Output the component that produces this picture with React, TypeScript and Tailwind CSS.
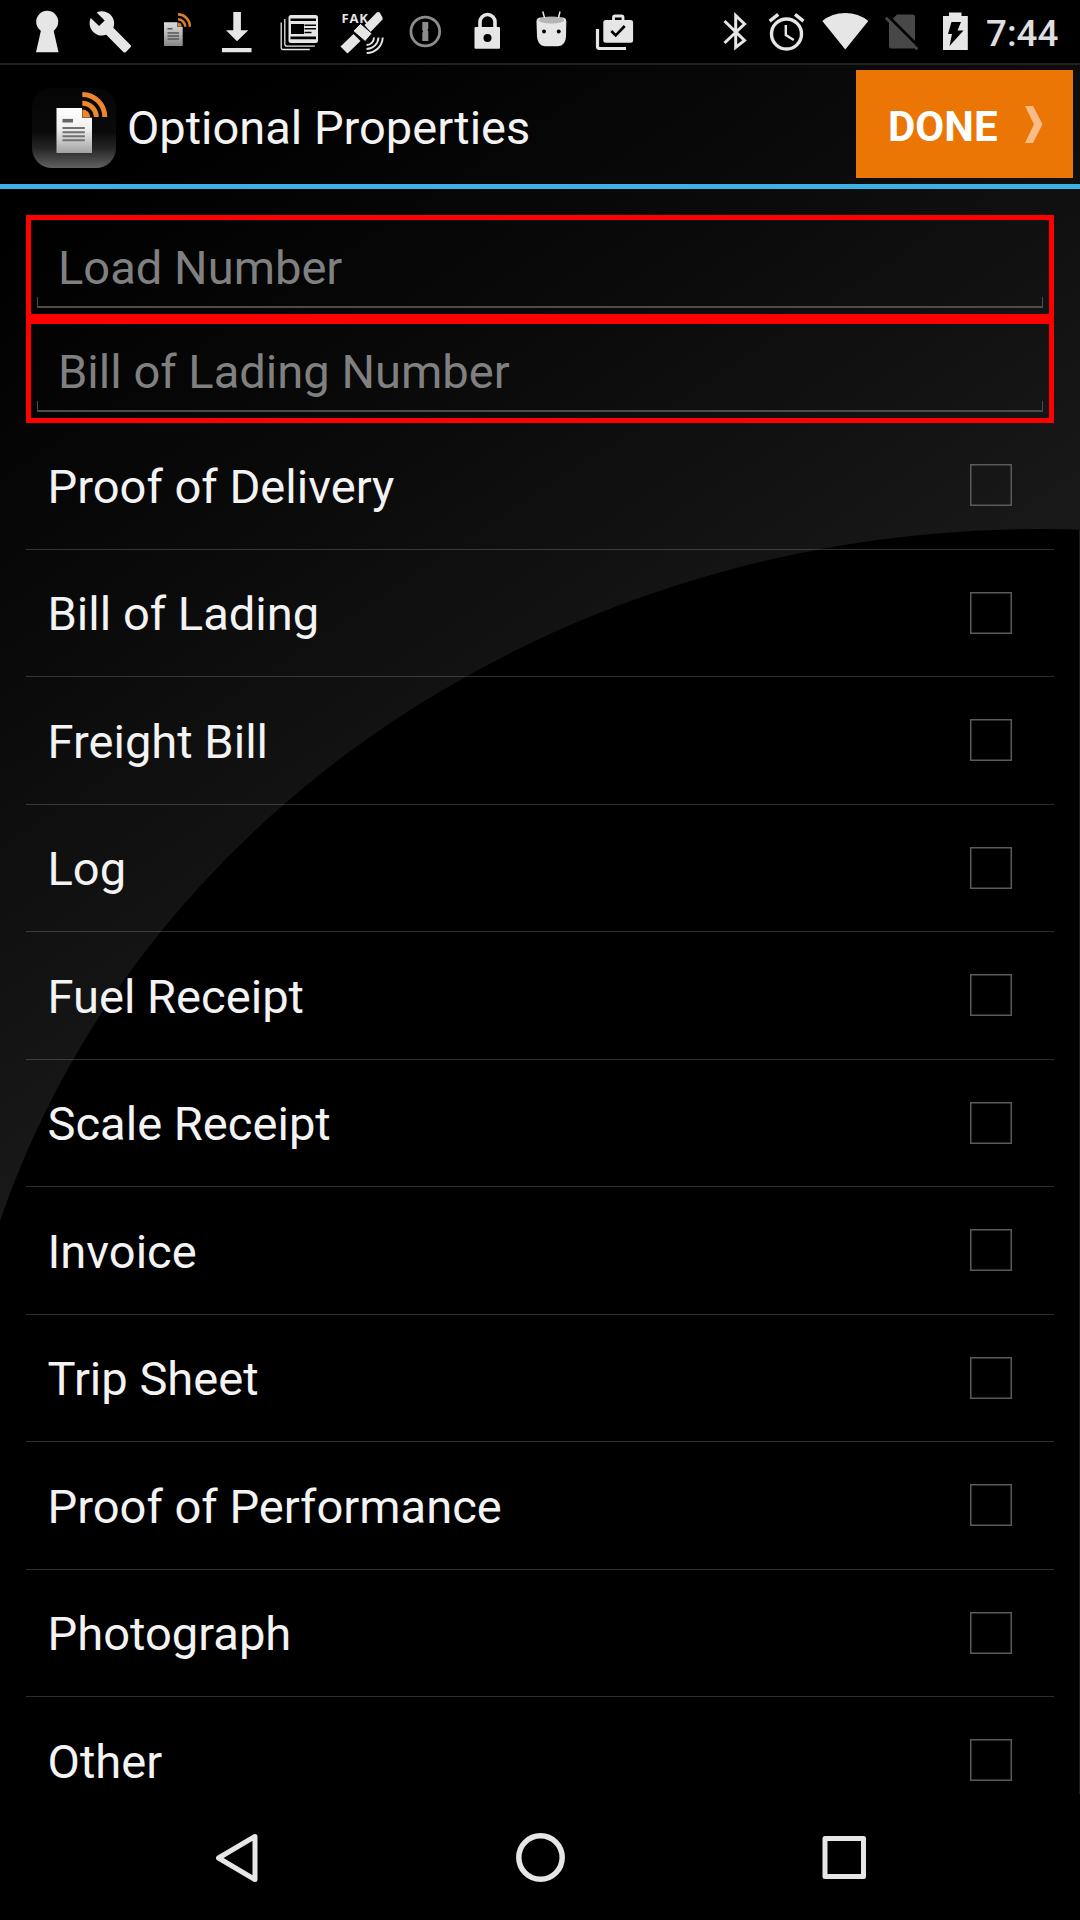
import React from "react";

const ITEMS = [
  "Proof of Delivery",
  "Bill of Lading",
  "Freight Bill",
  "Log",
  "Fuel Receipt",
  "Scale Receipt",
  "Invoice",
  "Trip Sheet",
  "Proof of Performance",
  "Photograph",
  "Other",
];

const LIGHT = "#e6e6e6";

// Every status glyph is drawn in status bar coordinates and windowed by its viewBox.
function Slot({ x, w = 63, children }: { x: number; w?: number; children: React.ReactNode }) {
  return (
    <svg width={w} height={63} viewBox={`${x} 0 ${w} 63`} className="shrink-0" fill={LIGHT}>
      {children}
    </svg>
  );
}

function StatusBar() {
  return (
    <div className="flex h-[63px] items-center bg-black pl-4">
      <Slot x={16}>
        <circle cx="47.2" cy="21.8" r="11" />
        <path d="M41.5 28h11.5l5.5 24.3H36z" />
      </Slot>
      <Slot x={79}>
        <path
          transform="translate(87.8 9.2) scale(1.88)"
          d="M22.7 19l-9.1-9.1c.9-2.3.4-5-1.5-6.9-2-2-5-2.4-7.4-1.3L9 6 6 9 1.6 4.7C.4 7.1.9 10.1 2.9 12.1c1.9 1.9 4.6 2.4 6.9 1.5l9.1 9.1c.4.4 1 .4 1.4 0l2.3-2.3c.5-.4.5-1.1.1-1.4z"
        />
      </Slot>
      <Slot x={142}>
        <defs>
          <linearGradient id="paperSmall" x1="0" y1="0" x2="0" y2="1">
            <stop offset="0" stopColor="#dcdcdc" />
            <stop offset="0.5" stopColor="#b5b5b5" />
            <stop offset="1" stopColor="#868686" />
          </linearGradient>
        </defs>
        <path d="M164 22.3h13.5v4.7h5.2v19H164z" fill="url(#paperSmall)" />
        <path d="M167.5 28.8h5M167.5 33h11.5M167.5 36h11.5M167.5 39h11.5" stroke="#555" strokeWidth="1.4" />
        <g fill="none" stroke="#d9802f" strokeWidth="2.6">
          <path d="M178 14.4A12 12 0 0 1 189.8 26.8" />
          <path d="M178 19.2A7.5 7.5 0 0 1 185.2 26.8" />
        </g>
        <path d="M178 22.7a4 4 0 0 1 3.8 4.1H178z" fill="#d9802f" />
      </Slot>
      <Slot x={205}>
        <path d="M233.3 12h7.6v18.3h7.4L237 41.3l-11-11h7.3zM222 48h29.5v4.3H222z" />
      </Slot>
      <Slot x={268}>
        <path d="M291 15h24.500a2.500 2.500 0 0 1 2.500 2.500v23a2.500 2.500 0 0 1-2.500 2.500H291a2.500 2.500 0 0 1-2.500-2.500v-23a2.500 2.500 0 0 1 2.500-2.500z" />
        <path d="M290.500 18.500h25.500v2.500h-25.500zM290.500 36.500h25.500v2.800h-25.500zM291 24h13v10h-13z" fill="#000" />
        <path d="M304.500 25.200h11.500M304.500 28.700h11.500M304.500 32.500h7" stroke="#000" strokeWidth="1.600" />
        <path d="M284.800 19v25a2 2 0 0 0 2 2.200h28M281.200 22.500v24.500a2 2 0 0 0 2 2.500h26.500" fill="none" stroke={LIGHT} strokeWidth="1.300" />
      </Slot>
      <Slot x={331}>
        <text x="341.500" y="23" className="font-bold" fontFamily="Open Sans, sans-serif" fontSize="13" letterSpacing="0.8">
          FAK
        </text>
        <path d="M364.500 25L377 12.300Q379 11.500 380 13L382.500 17.500V19.500L370.500 32z" />
        <path d="M340.500 46.500L353.500 34L360.500 41L347.500 53.500z" />
        <path d="M353 31L360.500 23.500L372 33.500L365.200 41.500z" stroke="#000" strokeWidth="0.900" strokeLinejoin="round" />
        <g fill="none" stroke={LIGHT} strokeWidth="1.900">
          <path d="M374 37.500a7.500 7.500 0 0 1-7.500 7.500" />
          <path d="M378.500 37.500a12 12 0 0 1-12 11.500" />
          <path d="M382.700 37.500a16 16 0 0 1-16 15.500" />
        </g>
      </Slot>
      <Slot x={394}>
        <circle cx="425.300" cy="31.500" r="14.400" fill="none" stroke="#8c8c8c" strokeWidth="2.800" />
        <path d="M422.300 22h6v6.500l-.8 1.500.8 1.500V41h-6v-8l.8-1.500-.8-1.500z" fill="#8c8c8c" />
      </Slot>
      <Slot x={457}>
        <path d="M480 28v-6a7.500 7.500 0 0 1 15 0v6" fill="none" stroke={LIGHT} strokeWidth="3.600" />
        <rect x="474.500" y="27" width="25.500" height="21.800" rx="1" />
        <circle cx="487.500" cy="38" r="4" fill="#000" />
      </Slot>
      <Slot x={520}>
        <path d="M536.500 21.500Q536.500 18 540 17.500h23q3.300.5 3.300 4l-.3 15q-.3 9-8 9.800h-13q-7.500-.8-8-9.800z" />
        <ellipse cx="551.500" cy="20" rx="12.500" ry="3.600" fill="#b4b4b4" />
        <path d="M542.800 11.500l1.800 6.500M560 11.500l-1.500 6.500" stroke={LIGHT} strokeWidth="1.500" />
        <circle cx="544" cy="31.500" r="2" fill="#000" />
        <circle cx="558.700" cy="31.500" r="2" fill="#000" />
      </Slot>
      <Slot x={583}>
        <path d="M613.500 21v-3.500q0-1.500 1.500-1.500h6.500q1.500 0 1.500 1.500V21" fill="none" stroke={LIGHT} strokeWidth="2.800" />
        <rect x="603.300" y="20" width="29.800" height="22.800" rx="2.500" />
        <path d="M611.300 31l4.400 4.500 9-9.500" fill="none" stroke="#000" strokeWidth="2.600" />
        <path d="M597.500 29v17.500q0 2 2 2H626" fill="none" stroke={LIGHT} strokeWidth="3.200" />
      </Slot>
      <div className="grow" />
      <Slot x={712} w={48}>
        <path d="M724.500 21L744.500 40.500L735.700 47.500V15.500L744.500 24L724.500 43" fill="none" stroke={LIGHT} strokeWidth="3" />
      </Slot>
      <Slot x={760} w={54}>
        <circle cx="786.500" cy="34" r="15" fill="none" stroke={LIGHT} strokeWidth="3.400" />
        <path d="M785.800 25v10l8 5" fill="none" stroke={LIGHT} strokeWidth="2.400" />
        <path d="M769.700 21.200l8.500-6.800M795 14.400l8.500 6.800" stroke={LIGHT} strokeWidth="3.400" />
      </Slot>
      <Slot x={814} w={64}>
        <path d="M845.300 49.500L822.300 21Q832 13 845.300 13T868.300 21z" />
      </Slot>
      <Slot x={878} w={54}>
        <path d="M897 14.500h15.500q2.500 0 2.500 2.500v30q0 1.500-2 1.500h-21.500q-2.500 0-2.500-2.500V22.500z" fill="#484848" />
        <path d="M887.500 15.500l32 32" stroke="#000" strokeWidth="3" />
        <path d="M885.800 17.800l31.500 31.500" stroke="#484848" strokeWidth="2.800" />
      </Slot>
      <Slot x={932} w={54}>
        <path d="M943 16h6v-3.500h12.500V16h6.300v34H943z" />
        <path d="M951.500 22h9.500l-3.500 8.500h6L949.500 46l2.500-12h-4z" fill="#000" />
      </Slot>
      <span className="mt-[5px] w-[94px] text-[36.75px] font-medium leading-none text-[#dedede]">7:44</span>
    </div>
  );
}

function AppIcon() {
  return (
    <svg width="96" height="100" viewBox="26 75 96 100" className="shrink-0">
      <defs>
        <linearGradient id="tile" x1="0" y1="0" x2="0" y2="1">
          <stop offset="0" stopColor="#050505" />
          <stop offset="0.55" stopColor="#0a0a0a" />
          <stop offset="0.75" stopColor="#242424" />
          <stop offset="1" stopColor="#606060" />
        </linearGradient>
        <linearGradient id="paper" x1="0" y1="0" x2="0" y2="1">
          <stop offset="0" stopColor="#ffffff" />
          <stop offset="0.45" stopColor="#f0f0f0" />
          <stop offset="1" stopColor="#a2a2a2" />
        </linearGradient>
      </defs>
      <rect x="32" y="88" width="84" height="80" rx="20" fill="url(#tile)" />
      <path d="M56.500 108H82v9.800h10V153H56.500z" fill="url(#paper)" />
      <path d="M62.500 120.700h10.500" stroke="#666" strokeWidth="3.600" />
      <path d="M62.500 128h22.300M62.500 132.300h22.300M62.500 136.300h22.300M62.500 140.300h22.300" stroke="#707070" strokeWidth="2" />
      <g fill="none" stroke="#ee862a" strokeWidth="5">
        <path d="M82.300 94.500A22.500 22.500 0 0 1 104.800 117" />
        <path d="M82.300 103.200A14 14 0 0 1 96.300 117" />
      </g>
      <path d="M82.300 109.500a8 8 0 0 1 8 8h-8z" fill="#ee862a" />
    </svg>
  );
}

function Header() {
  return (
    <header className="flex h-[126px] border-b-[5px] border-t-2 border-b-[#3db1e3] border-t-[#222222] pl-[26px] pr-[7px]">
      <div className="mt-[10px]">
        <AppIcon />
      </div>
      <h1 className="ml-[5px] mt-[35px] grow text-[47px] leading-[56px] text-[#f3f3f3]">Optional Properties</h1>
      <button className="mt-[5px] flex h-[108px] w-[217px] items-center bg-[#eb7606] pl-[32px] text-[42px] font-bold text-white">
        <span className="w-[136px] pt-1 text-left">DONE</span>
        <svg width="20" height="40" viewBox="1024 104 20 40">
          <path d="M1025 106h8l9.500 18.300-9.500 18.700h-8l9-18.700z" fill="#f8bd86" />
        </svg>
      </button>
    </header>
  );
}

function Field({ label }: { label: string }) {
  return (
    <div className="relative h-[104px] border-[5px] border-[#ff0000] px-[6px]">
      <div className="h-[88px] pl-[21px] pt-[20px] text-[47.1px] leading-[56px] text-[#808080]">{label}</div>
      <div className="absolute inset-x-[6px] bottom-[6px] h-[11px] border-x border-b-2 border-[#4c4c4e]" />
    </div>
  );
}

function CheckBox() {
  return (
    <svg width="42" height="42" viewBox="0 0 42 42" fill="none" stroke="#5a5a5a" strokeWidth="1.5">
      <rect x="0.75" y="0.75" width="40.5" height="40.5" />
    </svg>
  );
}

function Backdrop() {
  return (
    <svg className="absolute inset-0" width="1080" height="1920" viewBox="0 0 1080 1920">
      <defs>
        <linearGradient id="sheen" gradientUnits="userSpaceOnUse" x1="110" y1="166" x2="552" y2="836">
          <stop offset="0" stopColor="#000000" />
          <stop offset="0.5" stopColor="#0b0b0b" />
          <stop offset="1" stopColor="#181818" />
        </linearGradient>
      </defs>
      <rect width="1080" height="1920" fill="url(#sheen)" />
      <ellipse cx="1040" cy="1509" rx="1088" ry="980" fill="#000" />
      <rect x="1079" y="530" width="1" height="1264" fill="#1c1c1c" />
    </svg>
  );
}

function NavBar() {
  return (
    <nav className="flex h-[126px] items-center justify-center gap-[240px] bg-black">
      <svg width="64" height="64" viewBox="204.500 1825 64 64" fill="none" stroke={LIGHT} strokeWidth="5" strokeLinejoin="round">
        <path d="M255.500 1836.500v43L219 1858z" />
      </svg>
      <svg width="64" height="64" viewBox="508 1825 64 64" fill="none" stroke={LIGHT} strokeWidth="5.500">
        <circle cx="540.500" cy="1857.500" r="21.700" />
      </svg>
      <svg width="64" height="64" viewBox="812 1825 64 64" fill="none" stroke={LIGHT} strokeWidth="5" strokeLinejoin="round">
        <rect x="825" y="1838.500" width="38.500" height="38" />
      </svg>
    </nav>
  );
}

export default function App() {
  return (
    <div className="relative h-[1920px] w-[1080px] overflow-hidden bg-black font-['Roboto',sans-serif]">
      <Backdrop />
      <div className="relative flex h-full flex-col">
        <StatusBar />
        <Header />
        <main className="h-[1605px] overflow-hidden px-[26px] pt-[26px]">
          <Field label="Load Number" />
          <Field label="Bill of Lading Number" />
          <ul className="-mt-px">
            {ITEMS.map((item) => (
              <li
                key={item}
                className="flex h-[127.5px] items-center justify-between border-b border-white/18 pl-[21.500px] pr-[42px] text-[47.1px] leading-[56px] text-[#f3f3f3]"
              >
                <span className="pt-[3px]">{item}</span>
                <CheckBox />
              </li>
            ))}
          </ul>
        </main>
        <NavBar />
      </div>
    </div>
  );
}
